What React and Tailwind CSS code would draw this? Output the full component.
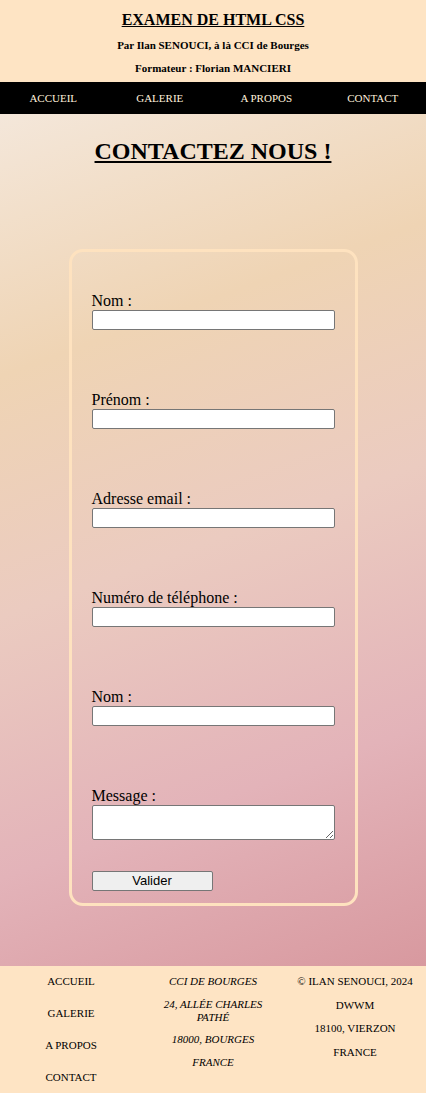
const NAV = ["ACCUEIL", "GALERIE", "A PROPOS", "CONTACT"];

const FIELDS = [
  { label: "Nom :", type: "text" },
  { label: "Prénom :", type: "text" },
  { label: "Adresse email :", type: "email" },
  { label: "Numéro de téléphone :", type: "tel" },
  { label: "Nom :", type: "text" },
];

export default function App() {
  return (
    <div className="min-h-screen font-['Liberation_Serif','Times_New_Roman',serif] text-black">
      {/* --- HEADER --- */}
      <header className="bg-[#fee4c4] text-center font-bold pt-[11px] h-[82px]">
        <h1 className="text-[16px] leading-[18px] underline">EXAMEN DE HTML CSS</h1>
        <p className="text-[11px] leading-[13px] mt-[10px]">
          Par Ilan SENOUCI, à là CCI de Bourges
        </p>
        <p className="text-[11px] leading-[13px] mt-[10px]">
          Formateur : Florian MANCIERI
        </p>
      </header>

      {/* --- NAV --- */}
      <nav className="bg-black h-[32px] grid grid-cols-4 items-center text-center">
        {NAV.map((item) => (
          <a key={item} className="text-[11px] text-[#fff1dc] leading-[13px] pt-[1px]">
            {item}
          </a>
        ))}
      </nav>

      {/* --- MAIN --- */}
      <main className="bg-[linear-gradient(160deg,#f4e7da_0%,#efd4b4_26%,#ebcbc0_50%,#e3b3b9_76%,#d8999f_100%)] pt-[24px] pb-[60px]">
        <h2 className="text-center text-[24px] leading-[27px] font-bold underline">
          CONTACTEZ NOUS !
        </h2>

        <form className="mx-auto mt-[84px] w-[289px] border-[3px] border-[#fee2bf] rounded-[14px] px-[20px] pt-[40px] pb-[11px]">
          {FIELDS.map((f, i) => (
            <div key={i} className="flex flex-col mb-[61px]">
              <label className="text-[16px] leading-[18px]">{f.label}</label>
              <input
                type={f.type}
                className="w-[243px] h-[20px] bg-white border border-[#767676] rounded-[2px]"
              />
            </div>
          ))}

          <div className="flex flex-col">
            <label className="text-[16px] leading-[18px]">Message :</label>
            <textarea className="w-[243px] h-[35px] bg-white border border-[#767676] rounded-[2px] resize-y" />
          </div>

          <button
            type="button"
            className="mt-[31px] w-[121px] h-[20px] bg-[#efefef] border border-[#767676] rounded-[2px] font-['Liberation_Sans',Arial,sans-serif] text-[13px] leading-[16px]"
          >
            Valider
          </button>
        </form>
      </main>

      {/* --- FOOTER --- */}
      <footer className="bg-[#fee4c4] h-[128px] grid grid-cols-3 text-center text-[11px] leading-[13px] pt-[9px]">
        <ul className="flex flex-col gap-[19px]">
          <li>ACCUEIL</li>
          <li>GALERIE</li>
          <li>A PROPOS</li>
          <li>CONTACT</li>
        </ul>

        <div className="italic px-[18px] flex flex-col gap-[10px]">
          <p>CCI DE BOURGES</p>
          <p className="leading-[12.5px]">24, ALLÉE CHARLES PATHÉ</p>
          <p>18000, BOURGES</p>
          <p>FRANCE</p>
        </div>

        <div className="flex flex-col gap-[10.5px]">
          <p>© ILAN SENOUCI, 2024</p>
          <p>DWWM</p>
          <p>18100, VIERZON</p>
          <p>FRANCE</p>
        </div>
      </footer>
    </div>
  );
}
